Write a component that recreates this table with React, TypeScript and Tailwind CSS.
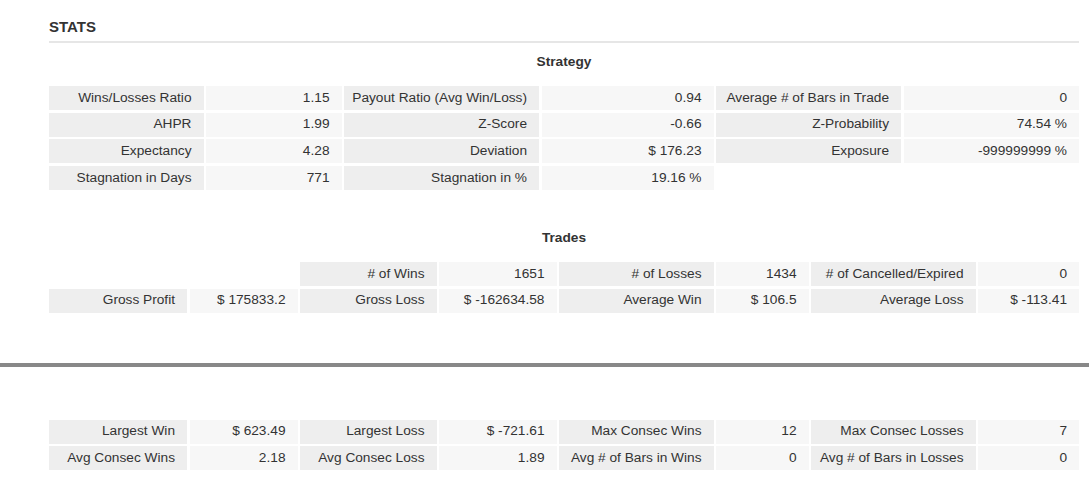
import clsx from 'clsx';

type Cell = { text: string; label?: boolean } | null;

const strategyRows: Cell[][] = [
    [
        { text: 'Wins/Losses Ratio', label: true },
        { text: '1.15' },
        { text: 'Payout Ratio (Avg Win/Loss)', label: true },
        { text: '0.94' },
        { text: 'Average # of Bars in Trade', label: true },
        { text: '0' },
    ],
    [
        { text: 'AHPR', label: true },
        { text: '1.99' },
        { text: 'Z-Score', label: true },
        { text: '-0.66' },
        { text: 'Z-Probability', label: true },
        { text: '74.54 %' },
    ],
    [
        { text: 'Expectancy', label: true },
        { text: '4.28' },
        { text: 'Deviation', label: true },
        { text: '$ 176.23' },
        { text: 'Exposure', label: true },
        { text: '-999999999 %' },
    ],
    [
        { text: 'Stagnation in Days', label: true },
        { text: '771' },
        { text: 'Stagnation in %', label: true },
        { text: '19.16 %' },
        null,
        null,
    ],
];

const tradeRows: Cell[][] = [
    [
        null,
        null,
        { text: '# of Wins', label: true },
        { text: '1651' },
        { text: '# of Losses', label: true },
        { text: '1434' },
        { text: '# of Cancelled/Expired', label: true },
        { text: '0' },
    ],
    [
        { text: 'Gross Profit', label: true },
        { text: '$ 175833.2' },
        { text: 'Gross Loss', label: true },
        { text: '$ -162634.58' },
        { text: 'Average Win', label: true },
        { text: '$ 106.5' },
        { text: 'Average Loss', label: true },
        { text: '$ -113.41' },
    ],
];

const consecRows: Cell[][] = [
    [
        { text: 'Largest Win', label: true },
        { text: '$ 623.49' },
        { text: 'Largest Loss', label: true },
        { text: '$ -721.61' },
        { text: 'Max Consec Wins', label: true },
        { text: '12' },
        { text: 'Max Consec Losses', label: true },
        { text: '7' },
    ],
    [
        { text: 'Avg Consec Wins', label: true },
        { text: '2.18' },
        { text: 'Avg Consec Loss', label: true },
        { text: '1.89' },
        { text: 'Avg # of Bars in Wins', label: true },
        { text: '0' },
        { text: 'Avg # of Bars in Losses', label: true },
        { text: '0' },
    ],
];

const StatGrid = ({ rows, cols }: { rows: Cell[][]; cols: string }) => (
    <div className={clsx('grid gap-x-[2.5px] gap-y-[2.7px]', cols)}>
        {rows.map((row, rowIndex) =>
            row.map((cell, cellIndex) => (
                <div
                    key={`${rowIndex}-${cellIndex}`}
                    className={clsx('flex h-[24px] items-center justify-end whitespace-nowrap pr-[12px]', {
                        'bg-[#eeeeee]': cell?.label,
                        'bg-[#f7f7f7]': cell && !cell.label,
                    })}
                >
                    {cell?.text}
                </div>
            ))
        )}
    </div>
);

const eightCols = 'grid-cols-[138px_108px_136.5px_117.5px_154.5px_92.5px_164.5px_101px]';

export default function App() {
    return (
        <div
            className="h-[482px] w-[1089px] overflow-hidden bg-white text-[13.7px] text-[#333333]"
            style={{ fontFamily: '"Liberation Sans", Arial, sans-serif' }}
        >
            <div className="pl-[49px] pr-[10px] pt-[17px]">
                <h2 className="h-[20px] text-[15px] font-bold leading-[20px]">STATS</h2>
                <div className="mt-[4px] h-[2px] bg-[#e6e6e6]"></div>
                <div className="mt-[9px] h-[20px] text-center font-bold leading-[20px]">Strategy</div>
                <div className="mt-[14px]">
                    <StatGrid rows={strategyRows} cols="grid-cols-[154.5px_135.5px_195px_172px_185px_175.5px]" />
                </div>
                <div className="mt-[38px] h-[20px] text-center font-bold leading-[20px]">Trades</div>
                <div className="mt-[14px]">
                    <StatGrid rows={tradeRows} cols={eightCols} />
                </div>
            </div>
            <div className="mt-[50px] h-[4px] w-full bg-[#888888]"></div>
            <div className="mt-[53px] pl-[49px] pr-[10px]">
                <StatGrid rows={consecRows} cols={eightCols} />
            </div>
        </div>
    );
}
